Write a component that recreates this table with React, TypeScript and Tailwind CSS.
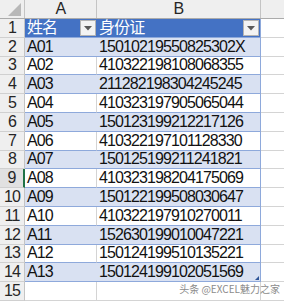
const rows = [
  ['A01', '15010219550825302X'],
  ['A02', '410322198108068355'],
  ['A03', '211282198304245245'],
  ['A04', '410323197905065044'],
  ['A05', '150123199212217126'],
  ['A06', '410322197101128330'],
  ['A07', '150125199211241821'],
  ['A08', '410323198204175069'],
  ['A09', '150122199508030647'],
  ['A10', '410322197910270011'],
  ['A11', '152630199010047221'],
  ['A12', '150124199510135221'],
  ['A13', '150124199102051569'],
];

const cellFont = 'font-["Liberation_Sans","Noto_Sans_CJK_SC",sans-serif] text-[16px] tracking-[-0.9px]';

function FilterButton() {
  return (
    <div className="absolute right-[1px] top-[1px] w-[16px] h-[16px] bg-[#f3f3f3] border border-[#b4b4b4] flex items-center justify-center">
      <svg width="8" height="5" viewBox="0 0 8 5" aria-hidden="true">
        <path d="M0 0h8L4 4.5z" fill="#595959" />
      </svg>
    </div>
  );
}

function RowHeader({ n, active }: { n: number; active?: boolean }) {
  return (
    <div
      className={`w-[25px] shrink-0 flex items-center justify-center border-b border-[#d0d0d0] text-[#262626] ${
        active ? 'bg-[#e1e1e1] border-r-2 border-r-[#217346]' : 'bg-[#efefef] border-r border-r-[#c4c4c4]'
      }`}
    >
      {n}
    </div>
  );
}

export default function App() {
  return (
    <div className={`relative w-[284px] h-[301px] overflow-hidden bg-white ${cellFont} leading-none`}>
      {/* column letters */}
      <div className="flex h-[19px] bg-[#efefef] border-b border-[#ababab] text-[#262626]">
        <div className="w-[25px] shrink-0 border-r border-[#c4c4c4] relative">
          <svg className="absolute right-[3px] bottom-[2px]" width="13" height="13" viewBox="0 0 13 13" aria-hidden="true">
            <path d="M13 0v13H0z" fill="#b8b8b8" />
          </svg>
        </div>
        <div className="w-[72px] shrink-0 border-r border-[#c4c4c4] flex items-center justify-center">A</div>
        <div className="w-[164px] shrink-0 border-r border-[#c4c4c4] flex items-center justify-center">B</div>
        <div className="flex-1" />
      </div>

      {/* table header */}
      <div className="flex h-[18.8px]">
        <RowHeader n={1} />
        <div className="relative w-[72px] shrink-0 bg-[#4472c4] text-white border-b border-[#8ea9db] flex items-center pl-[2px]">
          姓名
          <FilterButton />
        </div>
        <div className="relative w-[164px] shrink-0 bg-[#4472c4] text-white border-b border-r border-[#8ea9db] flex items-center pl-[2px]">
          身份证
          <FilterButton />
        </div>
        <div className="flex-1 border-b border-[#d4d4d4]" />
      </div>

      {rows.map(([name, id], i) => {
        const banded = i % 2 === 0;
        return (
          <div key={name} className="flex h-[18.8px] text-[#111]">
            <RowHeader n={i + 2} active={i === 7} />
            <div
              className={`w-[72px] shrink-0 border-b border-[#8ea9db] flex items-center pl-[2px] ${
                banded ? 'bg-[#d9e1f2]' : 'bg-white border-r border-r-[#d4d4d4]'
              }`}
            >
              {name}
            </div>
            <div
              className={`relative w-[164px] shrink-0 border-b border-r border-[#8ea9db] flex items-center pl-[2px] ${
                banded ? 'bg-[#d9e1f2]' : 'bg-white'
              }`}
            >
              {id}
              {i === rows.length - 1 && (
                <svg className="absolute right-[1px] bottom-[1px]" width="4" height="4" viewBox="0 0 4 4" aria-hidden="true">
                  <path d="M4 0v4H0z" fill="#2f5597" />
                </svg>
              )}
            </div>
            <div className="flex-1 border-b border-[#d4d4d4]" />
          </div>
        );
      })}

      {/* row 15 */}
      <div className="flex h-[18.8px]">
        <RowHeader n={15} />
        <div className="w-[72px] shrink-0 border-r border-b border-[#d4d4d4]" />
        <div className="w-[164px] shrink-0 border-r border-b border-[#d4d4d4]" />
        <div className="flex-1 border-b border-[#d4d4d4]" />
      </div>

      <div className="absolute right-[4px] bottom-[7px] text-[10px] tracking-normal text-[#8c8c8c] font-['Noto_Sans_CJK_SC',sans-serif]">
        头条 @EXCEL魅力之家
      </div>
    </div>
  );
}
